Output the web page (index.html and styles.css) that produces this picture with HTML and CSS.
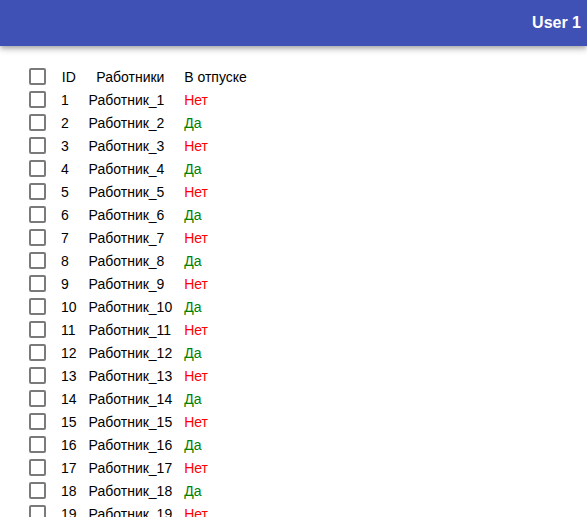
FILE: index.html
```html
<!DOCTYPE html>
<html lang="ru">
<head>
<meta charset="utf-8">
<title>Работники</title>
<link rel="stylesheet" href="styles.css">
</head>
<body>
<header class="toolbar">
  <span class="user">User 1</span>
</header>
<main class="content">
  <table class="staff">
    <thead>
      <tr>
        <th class="sel"><input type="checkbox" class="box"></th>
        <th>ID</th>
        <th>Работники</th>
        <th>В отпуске</th>
      </tr>
    </thead>
    <tbody>
      <tr><td class="sel"><input type="checkbox" class="box"></td><td>1</td><td>Работник_1</td><td class="no">Нет</td></tr>
      <tr><td class="sel"><input type="checkbox" class="box"></td><td>2</td><td>Работник_2</td><td class="yes">Да</td></tr>
      <tr><td class="sel"><input type="checkbox" class="box"></td><td>3</td><td>Работник_3</td><td class="no">Нет</td></tr>
      <tr><td class="sel"><input type="checkbox" class="box"></td><td>4</td><td>Работник_4</td><td class="yes">Да</td></tr>
      <tr><td class="sel"><input type="checkbox" class="box"></td><td>5</td><td>Работник_5</td><td class="no">Нет</td></tr>
      <tr><td class="sel"><input type="checkbox" class="box"></td><td>6</td><td>Работник_6</td><td class="yes">Да</td></tr>
      <tr><td class="sel"><input type="checkbox" class="box"></td><td>7</td><td>Работник_7</td><td class="no">Нет</td></tr>
      <tr><td class="sel"><input type="checkbox" class="box"></td><td>8</td><td>Работник_8</td><td class="yes">Да</td></tr>
      <tr><td class="sel"><input type="checkbox" class="box"></td><td>9</td><td>Работник_9</td><td class="no">Нет</td></tr>
      <tr><td class="sel"><input type="checkbox" class="box"></td><td>10</td><td>Работник_10</td><td class="yes">Да</td></tr>
      <tr><td class="sel"><input type="checkbox" class="box"></td><td>11</td><td>Работник_11</td><td class="no">Нет</td></tr>
      <tr><td class="sel"><input type="checkbox" class="box"></td><td>12</td><td>Работник_12</td><td class="yes">Да</td></tr>
      <tr><td class="sel"><input type="checkbox" class="box"></td><td>13</td><td>Работник_13</td><td class="no">Нет</td></tr>
      <tr><td class="sel"><input type="checkbox" class="box"></td><td>14</td><td>Работник_14</td><td class="yes">Да</td></tr>
      <tr><td class="sel"><input type="checkbox" class="box"></td><td>15</td><td>Работник_15</td><td class="no">Нет</td></tr>
      <tr><td class="sel"><input type="checkbox" class="box"></td><td>16</td><td>Работник_16</td><td class="yes">Да</td></tr>
      <tr><td class="sel"><input type="checkbox" class="box"></td><td>17</td><td>Работник_17</td><td class="no">Нет</td></tr>
      <tr><td class="sel"><input type="checkbox" class="box"></td><td>18</td><td>Работник_18</td><td class="yes">Да</td></tr>
      <tr><td class="sel"><input type="checkbox" class="box"></td><td>19</td><td>Работник_19</td><td class="no">Нет</td></tr>
    </tbody>
  </table>
</main>
</body>
</html>
```

FILE: styles.css
```css
html, body {
  margin: 0;
  padding: 0;
  background: #ffffff;
}

body {
  font-family: "Liberation Sans", Arial, sans-serif;
  font-size: 14px;
  color: #000000;
  overflow: hidden;
  height: 517px;
}

.toolbar {
  position: relative;
  z-index: 2;
  height: 46px;
  background: #3f51b5;
  display: flex;
  justify-content: flex-end;
  align-items: center;
  padding-right: 6px;
  box-shadow: 0 2px 4px -1px rgba(0, 0, 0, 0.2),
              0 4px 5px 0 rgba(0, 0, 0, 0.14),
              0 1px 10px 0 rgba(0, 0, 0, 0.12);
}

.user {
  color: #ffffff;
  font-weight: bold;
  font-size: 16px;
  line-height: 20px;
}

.content {
  padding: 19px 0 0 23px;
}

.staff {
  border-collapse: collapse;
}

.staff th,
.staff td {
  height: 23px;
  padding: 0 6px;
  line-height: 16px;
  vertical-align: middle;
  white-space: nowrap;
}

.staff th {
  font-weight: normal;
  text-align: center;
}

.staff td {
  text-align: left;
}

.staff .sel {
  padding-right: 9px;
}

.box {
  appearance: none;
  -webkit-appearance: none;
  display: block;
  box-sizing: border-box;
  width: 17px;
  height: 17px;
  margin: 0;
  border: 2px solid #7a7a7a;
  border-radius: 2px;
  background: #ffffff;
}

.no {
  color: #ff0000;
}

.yes {
  color: #008000;
}
```
